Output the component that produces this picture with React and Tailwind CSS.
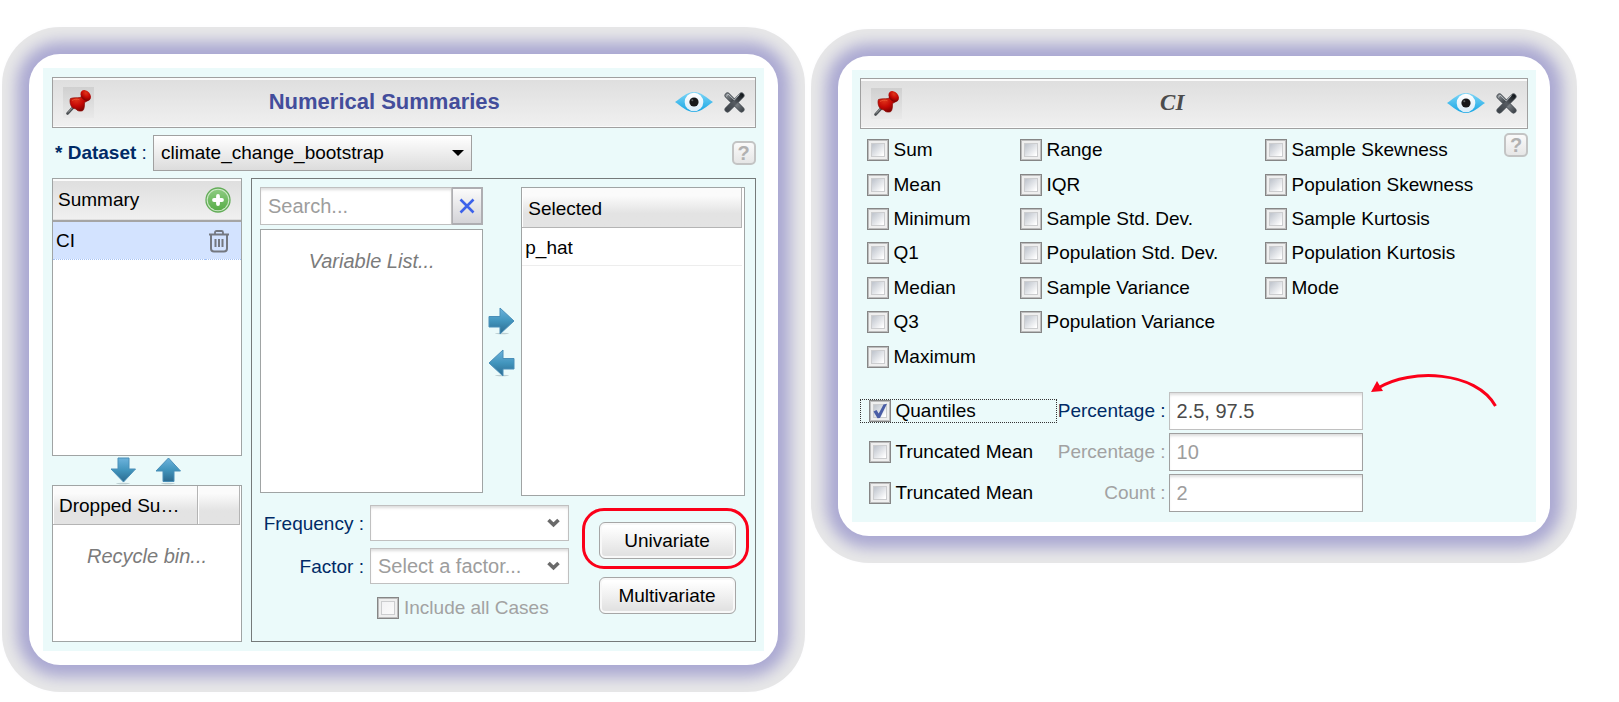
import React from "react";

const FRAME =
  "min-w-0 rounded-[31px] bg-white p-[14px] shadow-[0_0_15px_12px_#aaa8d2,0_0_0_27px_#e8e8e8]";
const BAR =
  "bg-gradient-to-b from-[#dedede] to-[#f0f0f0] shadow-[inset_0_2px_0_#fbfbfb,inset_0_-1px_0_#fbfbfb]";
const COLUMN_HEAD =
  "bg-gradient-to-b from-[#fbfbfb] from-20% to-[#e3e3e3] to-65% border-b border-r border-[#b4b4b4] shadow-[inset_1px_0_0_#fff] text-left font-normal";
const LABEL = "text-[19px] text-[#002a66]";
const FIELD =
  "w-full min-w-0 rounded-none border bg-white px-[7px] text-[20px] outline-none shadow-[inset_0_3px_3px_-1px_#dddddd] placeholder:text-[#9d9d9d]";

function PushPin() {
  return (
    <svg viewBox="0 0 31 31" className="h-[31px] w-[31px]" aria-hidden="true">
      <defs>
        <linearGradient id="pinBack" x1="0" y1="0" x2="0" y2="1">
          <stop offset="0" stopColor="#d0d0d0" />
          <stop offset="1" stopColor="#e9e9e9" />
        </linearGradient>
        <radialGradient id="pinRed" cx=".35" cy=".3" r=".8">
          <stop offset="0" stopColor="#e0351a" />
          <stop offset=".5" stopColor="#c40805" />
          <stop offset="1" stopColor="#6d0000" />
        </radialGradient>
      </defs>
      <rect width="31" height="31" fill="url(#pinBack)" />
      <path d="M4.500 26.500 L11.500 19" stroke="#4b4f52" strokeWidth="2.600" strokeLinecap="round" />
      <path d="M5 25.500 L10.500 19.500" stroke="#a9adb0" strokeWidth=".8" />
      <path
        d="M7.500 11.500C10 10.500 14 11 17.500 10.500L19.500 7.500L25 13.500L21.500 15.500C21.500 18.500 21.500 22.500 19.500 23.800C17 24.500 14 24 13 22C10.500 21.500 8.500 20.500 7.500 17.500C6.900 15 6.800 13 7.500 11.500Z"
        fill="url(#pinRed)"
        stroke="#8c0a05"
        strokeWidth=".7"
      />
      <ellipse cx="22.700" cy="8.500" rx="6" ry="4.500" transform="rotate(48 22.700 8.500)" fill="url(#pinRed)" />
      <path d="M9 13.500C11.500 12 14 12 16.500 12.800" stroke="#f0603a" strokeWidth="1" fill="none" opacity=".7" />
    </svg>
  );
}

function EyeIcon() {
  return (
    <svg viewBox="0 0 38 22" className="h-[22px] w-[38px]" aria-hidden="true">
      <defs>
        <linearGradient id="eyeBlue" x1="0" y1="0" x2="0" y2="1">
          <stop offset="0" stopColor="#7fd6f7" />
          <stop offset="1" stopColor="#14a5e4" />
        </linearGradient>
        <linearGradient id="eyeWhite" x1="0" y1="0" x2="0" y2="1">
          <stop offset="0" stopColor="#ffffff" />
          <stop offset="1" stopColor="#d9ecf8" />
        </linearGradient>
      </defs>
      <path d="M0 11C6 7 12 1 19 1S32 7 38 11C32 15 26 21 19 21S6 15 0 11Z" fill="url(#eyeBlue)" />
      <circle cx="19" cy="11" r="9.300" fill="url(#eyeWhite)" />
      <circle cx="19" cy="11" r="4.600" fill="#17181a" />
      <circle cx="17.300" cy="9.300" r="1" fill="#5c6063" />
    </svg>
  );
}

function CloseIcon() {
  return (
    <svg viewBox="0 0 21 21" className="h-[21px] w-[21px]" aria-hidden="true">
      <defs>
        <linearGradient id="closeDark" gradientUnits="userSpaceOnUse" x1="2" y1="2" x2="19" y2="19">
          <stop offset="0" stopColor="#8b9094" />
          <stop offset=".45" stopColor="#3a4046" />
          <stop offset=".65" stopColor="#777c81" />
          <stop offset="1" stopColor="#3b4147" />
        </linearGradient>
        <linearGradient id="closeRise" gradientUnits="userSpaceOnUse" x1="2" y1="19" x2="19" y2="2">
          <stop offset="0" stopColor="#3b4147" />
          <stop offset=".5" stopColor="#565b61" />
          <stop offset="1" stopColor="#0d1216" />
        </linearGradient>
      </defs>
      <path d="M3.500 3.500L17.500 17.500M17.500 3.500L3.500 17.500" stroke="#4d5359" strokeWidth="6" strokeLinecap="round" />
      <path d="M3.500 3.500L17.500 17.500" stroke="url(#closeDark)" strokeWidth="4.400" strokeLinecap="round" />
      <path d="M17.500 3.500L3.500 17.500" stroke="url(#closeRise)" strokeWidth="4.400" strokeLinecap="round" />
      <path d="M2.500 4.500L4 2L10.300 8L15.500 2.500" stroke="#c0c5c9" strokeWidth=".9" fill="none" />
    </svg>
  );
}

function AddIcon() {
  return (
    <svg viewBox="0 0 26 26" className="h-[26px] w-[26px]" aria-hidden="true">
      <defs>
        <linearGradient id="addGreen" x1="0" y1="0" x2="0" y2="1">
          <stop offset="0" stopColor="#8ccb80" />
          <stop offset="1" stopColor="#58ad48" />
        </linearGradient>
      </defs>
      <circle cx="13" cy="13" r="12" fill="#cfe8c9" stroke="#63ad58" strokeWidth="1.300" />
      <circle cx="13" cy="13" r="10.300" fill="url(#addGreen)" />
      <path d="M13 9V17M9 13H17" stroke="#fff" strokeWidth="3.800" strokeLinecap="round" />
    </svg>
  );
}

function TrashIcon() {
  return (
    <svg viewBox="0 0 20 23" className="h-[23px] w-5" fill="none" stroke="#747880" aria-hidden="true">
      <path d="M0 4.500H20" strokeWidth="2" />
      <path d="M6 4V2.500C6 1.500 6.600 1 7.500 1H12.500C13.400 1 14 1.500 14 2.500V4" strokeWidth="1.800" />
      <path d="M2 5V18.500C2 20.500 3 21.600 5 21.600H15C17 21.600 18 20.500 18 18.500V5" strokeWidth="2" />
      <path d="M6.500 9V17M10 9V17M13.500 9V17" strokeWidth="2" />
    </svg>
  );
}

const ARROWS = {
  right: "M1 9.500H12V1L26 14L12 27V20H1Z",
  left: "M26 9.500H15V1L1 14L15 27V20H26Z",
  down: "M9 1H20V12H26.500L14.500 25L2 12H9Z",
  up: "M9 24.500H20V14H26.500L14.500 1L2 14H9Z",
};

function ArrowIcon({ direction }) {
  const id = "arrow-" + direction;
  return (
    <svg viewBox="0 0 28 28" className="h-7 w-7" aria-hidden="true">
      <defs>
        <linearGradient id={id} x1="0" y1="0" x2="0" y2="1">
          <stop offset="0" stopColor="#6db3dc" />
          <stop offset=".5" stopColor="#4295bd" />
          <stop offset="1" stopColor="#2b6a8f" />
        </linearGradient>
      </defs>
      <ellipse cx="14" cy="26.500" rx="7" ry=".8" fill="#9fb3b8" opacity=".6" />
      <path d={ARROWS[direction]} fill={"url(#" + id + ")"} stroke="#4a8fb8" strokeWidth="1" />
    </svg>
  );
}

function PanelHeader({ children }) {
  return (
    <header className={"flex h-[51px] items-center border border-[#a0a0a0] pb-px pl-[10px] pr-[10px] " + BAR}>
      <button type="button" aria-label="Pin" className="shrink-0">
        <PushPin />
      </button>
      {children}
      <div className="flex shrink-0 items-center gap-[11px]">
        <button type="button" aria-label="Show">
          <EyeIcon />
        </button>
        <button type="button" aria-label="Close">
          <CloseIcon />
        </button>
      </div>
    </header>
  );
}

function HelpButton() {
  return (
    <button
      type="button"
      aria-label="Help"
      className="flex h-6 w-6 shrink-0 items-center justify-center rounded-[5px] border-2 border-[#c3c4c4] bg-gradient-to-b from-[#fafafa] to-[#e6e6e6] text-[20px] font-bold leading-none text-[#b1b1b1]"
    >
      ?
    </button>
  );
}

function CheckBox({ id, label, checked, muted }) {
  return (
    <div className="flex items-center gap-[5px]">
      <span className="grid h-[22px] w-[22px] shrink-0">
        <input
          id={id}
          type="checkbox"
          defaultChecked={checked}
          disabled={muted}
          className="peer col-start-1 row-start-1 h-[22px] w-[22px] appearance-none border border-[#868686] bg-gradient-to-br from-[#c3c8d0] from-25% to-[#ffffff] to-75% shadow-[inset_0_0_0_1px_#bdbdbd,inset_0_0_0_3px_#efefef,inset_0_0_0_4px_#cccdcf] disabled:from-[#f3f3f5] disabled:to-[#fafafa]"
        />
        <svg
          viewBox="0 0 22 22"
          className="pointer-events-none invisible col-start-1 row-start-1 h-[22px] w-[22px] peer-checked:visible"
          aria-hidden="true"
        >
          <path d="M4.500 11.500L7.500 10L9.700 13.500L14.500 4.500L18 3.800L11 18L8.500 18.300Z" fill="#4a5da6" />
        </svg>
      </span>
      <label htmlFor={id} className={muted ? "whitespace-nowrap text-[#a2a2a2]" : "whitespace-nowrap"}>
        {label}
      </label>
    </div>
  );
}

function FormSelect({ id, label, option }) {
  return (
    <>
      <label htmlFor={id} className={"pr-[6px] pt-px text-right " + LABEL}>
        {label} :
      </label>
      <span className="grid items-center">
        <select
          id={id}
          className={"col-start-1 row-start-1 h-9 appearance-none border-[#c0c0c0] text-[#9d9d9d] " + FIELD}
        >
          <option>{option}</option>
        </select>
        <svg
          viewBox="0 0 13 10"
          className="pointer-events-none col-start-1 row-start-1 mr-[9px] h-[10px] w-[13px] justify-self-end"
          aria-hidden="true"
        >
          <path d="M1.500 2L6.500 6.800L11.500 2" fill="none" stroke="#6a6a6a" strokeWidth="3.600" />
        </svg>
      </span>
    </>
  );
}

const PUSH_BUTTON =
  "h-[37px] w-full rounded-md border border-[#a6a6a6] bg-gradient-to-b from-[#ffffff] from-10% to-[#e2e2e2] to-90% shadow-[inset_0_0_0_2px_#f8f8f8] text-[19px]";

function NumericalSummaries() {
  return (
    <section className={"flex-[748_1_748px] " + FRAME}>
      <div className="bg-[#ebfafa] p-[9px] pr-2">
        <PanelHeader>
          <h1 className="flex-1 text-center text-[22px] font-bold text-[#434d9b]">Numerical Summaries</h1>
        </PanelHeader>

        <div className="my-[7px] flex h-9 items-center">
          <label htmlFor="dataset" className={"w-[101px] pl-[3px] " + LABEL}>
            <b>* Dataset</b> :
          </label>
          <span className="grid w-[319px] items-center">
            <select
              id="dataset"
              className="col-start-1 row-start-1 h-9 w-full appearance-none rounded-none border border-[#a0a0a0] bg-gradient-to-b from-[#ffffff] to-[#dcdcdc] px-[7px] text-[19px] text-black"
            >
              <option>climate_change_bootstrap</option>
            </select>
            <svg
              viewBox="0 0 12 6"
              className="pointer-events-none col-start-1 row-start-1 mr-2 h-[6px] w-3 justify-self-end"
              aria-hidden="true"
            >
              <path d="M0 0H12L6 6Z" fill="#000" />
            </svg>
          </span>
          <span className="ml-auto">
            <HelpButton />
          </span>
        </div>

        <div className="flex gap-[9px]">
          <div className="flex w-[190px] shrink-0 flex-col">
            <div className="h-[278px] border border-[#a0a4a4] bg-white">
              <table className="w-full border-collapse">
                <thead>
                  <tr className={"h-[42px] border-b-2 border-[#a5a5a5] " + BAR}>
                    <th className="pl-[5px] text-left font-normal">Summary</th>
                    <th className="w-9">
                      <button type="button" aria-label="Add summary" className="block">
                        <AddIcon />
                      </button>
                    </th>
                  </tr>
                </thead>
                <tbody>
                  <tr className="h-[38px] border-b border-dotted border-[#a5c3f5] bg-[#d3e3ff]">
                    <td className="pl-[3px] pt-[2px]">CI</td>
                    <td className="pl-[4px] pt-[2px]">
                      <button type="button" aria-label="Delete CI" className="block">
                        <TrashIcon />
                      </button>
                    </td>
                  </tr>
                </tbody>
              </table>
            </div>
            <div className="flex h-[29px] items-center justify-center gap-[17px] pr-[3px]">
              <button type="button" aria-label="Drop summary">
                <ArrowIcon direction="down" />
              </button>
              <button type="button" aria-label="Restore summary">
                <ArrowIcon direction="up" />
              </button>
            </div>
            <div className="h-[157px] border border-[#a0a4a4] bg-white">
              <div className="flex h-[39px] pr-px">
                <div className={"flex w-[145px] items-center pl-[6px] pt-px " + COLUMN_HEAD}>Dropped Su…</div>
                <div className={"flex-1 " + COLUMN_HEAD}></div>
              </div>
              <p className="pt-[17px] text-center text-[20px] italic leading-[28px] text-[#7b7b7b]">Recycle bin...</p>
            </div>
          </div>

          <div className="min-w-0 flex-1 border border-[#757a7a] pb-[7px] pl-2 pr-[10px] pt-2">
            <div className="grid h-[309px] grid-cols-[minmax(0,1fr)_38px_minmax(0,1fr)]">
              <div className="flex flex-col gap-1">
                <div className="flex h-[38px]">
                  <input
                    type="text"
                    aria-label="Search"
                    placeholder="Search..."
                    className={"border-[#c0c0c0] " + FIELD}
                  />
                  <button
                    type="button"
                    aria-label="Clear search"
                    className="flex w-[31px] shrink-0 items-center justify-center border-2 border-l border-[#aeaeb2] bg-gradient-to-b from-[#fbfbfb] to-[#d4d4d8]"
                  >
                    <svg viewBox="0 0 16 16" className="h-4 w-4" aria-hidden="true">
                      <path d="M1.500 1.500L14.500 14.500M14.500 1.500L1.500 14.500" stroke="#3c62ea" strokeWidth="2.600" />
                    </svg>
                  </button>
                </div>
                <div className="h-[264px] border border-[#a0a4a4] bg-white pt-[17px] text-center text-[20px] italic leading-[28px] text-[#7b7b7b]">
                  Variable List...
                </div>
              </div>
              <div className="flex flex-col items-center gap-[14px] pt-[120px]">
                <button type="button" aria-label="Add variable">
                  <ArrowIcon direction="right" />
                </button>
                <button type="button" aria-label="Remove variable">
                  <ArrowIcon direction="left" />
                </button>
              </div>
              <div className="border border-[#a0a4a4] bg-white pr-[2px]">
                <table className="w-full border-separate border-spacing-0">
                  <thead>
                    <tr className="h-10">
                      <th className={"pl-[6px] pt-[2px] " + COLUMN_HEAD}>Selected</th>
                    </tr>
                  </thead>
                  <tbody>
                    <tr className="h-[38px]">
                      <td className="border-b border-[#ededed] pl-[3px] pt-[2px]">p_hat</td>
                    </tr>
                  </tbody>
                </table>
              </div>
            </div>

            <div className="mt-[9px] flex justify-between">
              <div className="flex flex-col gap-[13px]">
                <div className="grid grid-cols-[110px_199px] items-center gap-y-[7px]">
                  <FormSelect id="frequency" label="Frequency" option="" />
                  <FormSelect id="factor" label="Factor" option="Select a factor..." />
                </div>
                <div className="pl-[117px]">
                  <CheckBox id="all-cases" label="Include all Cases" muted />
                </div>
              </div>
              <div className="mr-[9px] mt-[17px] flex w-[137px] flex-col gap-[18px]">
                <div className="relative">
                  <button type="button" className={PUSH_BUTTON}>
                    Univariate
                  </button>
                  <span className="pointer-events-none absolute -bottom-[10px] -left-[17px] -right-[13px] -top-[14px] rounded-[22px] border-[3px] border-[#fb0019]"></span>
                </div>
                <button type="button" className={PUSH_BUTTON}>
                  Multivariate
                </button>
              </div>
            </div>
          </div>
        </div>
      </div>
    </section>
  );
}

const STATISTICS = [
  ["Sum", "Mean", "Minimum", "Q1", "Median", "Q3", "Maximum"],
  ["Range", "IQR", "Sample Std. Dev.", "Population Std. Dev.", "Sample Variance", "Population Variance"],
  ["Sample Skewness", "Population Skewness", "Sample Kurtosis", "Population Kurtosis", "Mode"],
];

const PARAMETERS = [
  { id: "quantiles", name: "Quantiles", label: "Percentage", value: "2.5, 97.5", active: true },
  { id: "trim-percent", name: "Truncated Mean", label: "Percentage", value: "10", active: false },
  { id: "trim-count", name: "Truncated Mean", label: "Count", value: "2", active: false },
];

function SummaryOptions() {
  return (
    <section className={"mt-[2px] flex-[712_1_712px] " + FRAME}>
      <div className="bg-[#ebfafa] p-2 pb-[10px]">
        <PanelHeader>
          <h2 className="flex-1 pr-1 text-center font-['Liberation_Serif',serif] text-[23px] font-bold italic text-[#4c4c4c]">
            CI
          </h2>
        </PanelHeader>

        <div className="flex items-start justify-between pl-[7px] pt-1">
          <div className="grid h-[241px] grid-flow-col grid-cols-[153px_245px_auto] grid-rows-7">
            {STATISTICS.map((column, c) =>
              Array.from({ length: 7 }, (_, r) =>
                column[r] ? (
                  <div key={c + "-" + r} className="flex items-center">
                    <CheckBox id={"stat-" + c + "-" + r} label={column[r]} />
                  </div>
                ) : (
                  <div key={c + "-" + r}></div>
                )
              )
            )}
          </div>
          <HelpButton />
        </div>

        <div className="relative mt-[18px] flex w-[639px] max-w-full flex-col gap-[3px]">
          {PARAMETERS.map((p) => (
            <div key={p.id} className="flex h-[38px] items-center">
              <div
                className={
                  p.active
                    ? "w-[197px] shrink-0 border border-dotted border-[#333333] pl-[8px]"
                    : "w-[197px] shrink-0 border border-transparent pl-[8px]"
                }
              >
                <CheckBox id={p.id} label={p.name} checked={p.active} />
              </div>
              <label
                htmlFor={p.id + "-value"}
                className={
                  p.active
                    ? "w-[112px] shrink-0 pr-[3px] text-right text-[#002a66]"
                    : "w-[112px] shrink-0 pr-[3px] text-right text-[#a2a2a2]"
                }
              >
                {p.label} :
              </label>
              <div className="w-[194px]">
                <input
                  id={p.id + "-value"}
                  type="text"
                  defaultValue={p.value}
                  className={
                    (p.active ? "border-[#c0c0c0] text-[#4a4a4a] " : "border-[#a0a0a0] text-[#9d9d9d] ") +
                    "h-[38px] " +
                    FIELD
                  }
                />
              </div>
            </div>
          ))}
          <svg
            viewBox="0 0 128 34"
            className="pointer-events-none absolute -top-[18px] right-0 h-[34px] w-32"
            aria-hidden="true"
          >
            <path d="M7 14C40 -6 105 -3 124.500 32" fill="none" stroke="#fb0019" strokeWidth="3" />
            <path d="M0 18L6 7L12 17Z" fill="#fb0019" />
          </svg>
        </div>
      </div>
    </section>
  );
}

export default function App() {
  return (
    <main className="flex min-w-[1500px] items-start gap-[60px] bg-white pb-[37px] pl-[29px] pr-[69px] pt-[54px] font-['Liberation_Sans',Arial,sans-serif] text-[19px] leading-[22px] text-black">
      <NumericalSummaries />
      <SummaryOptions />
    </main>
  );
}
